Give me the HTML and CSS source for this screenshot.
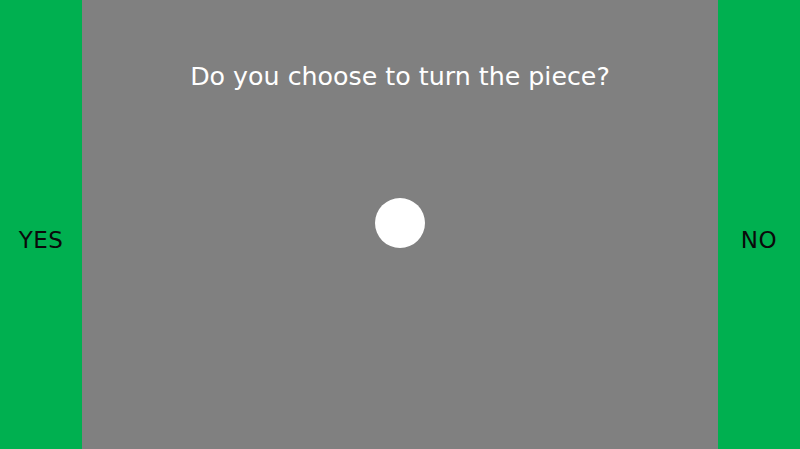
FILE: index.html
```html
<!DOCTYPE html>
<html>
<head>
<meta charset="utf-8">
<link rel="stylesheet" href="styles.css">
</head>
<body>
<div class="screen">
  <div class="side">YES</div>
  <div class="center">
    <div class="question">Do you choose to turn the piece?</div>
    <div class="dot"></div>
  </div>
  <div class="side">NO</div>
</div>
</body>
</html>
```
FILE: styles.css
```css
html, body { margin: 0; padding: 0; }
body { width: 800px; height: 449px; overflow: hidden; font-family: "DejaVu Sans", Verdana, sans-serif; }
.screen { display: flex; width: 800px; height: 449px; }
.side { width: 82px; box-sizing: border-box; background: #00b050; color: #0a0a0a; font-size: 23px; letter-spacing: 0.5px; display: flex; align-items: center; justify-content: center; padding-top: 31px; }
.center { flex: 1; background: #808080; display: flex; flex-direction: column; align-items: center; }
.question { color: #fff; font-size: 25.3px; margin-top: 62px; line-height: 30px; }
.dot { width: 50px; height: 50px; border-radius: 50%; background: #fff; margin-top: 106px; }
```
